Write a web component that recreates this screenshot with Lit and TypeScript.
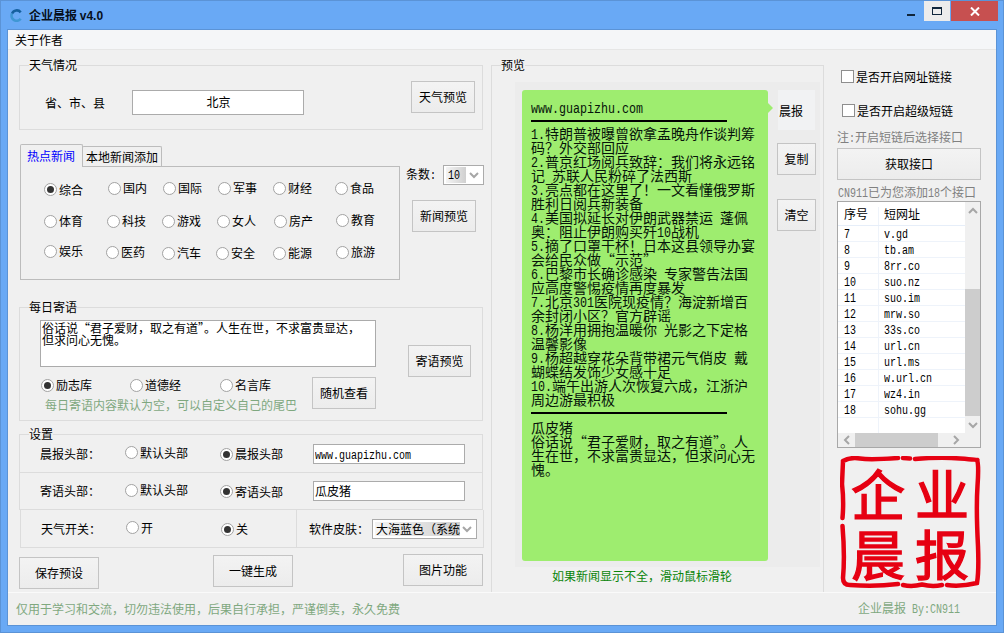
import { LitElement, html, css, svg } from "lit";
import { customElement } from "lit/decorators.js";

// half-width latin runs, like the bitmap font of the original window:
// a mono font squeezed to 0.5em per glyph, the margin takes back the spare width
const t = (text: string) =>
  text
    .split(/([\x20-\x7e]+)/)
    .map((part, i) =>
      i % 2
        ? html`<span class="latin" style="margin-right:${(-part.length * 0.1).toFixed(1)}em">${part}</span>`
        : part,
    );

const NEWS_ROWS = [
  [["综合", 44, 0], ["国内", 108, 0], ["国际", 163, 0], ["军事", 218, 0], ["财经", 273, 0], ["食品", 335, 0]],
  [["体育", 44, 0], ["科技", 107, 0], ["游戏", 162, 0], ["女人", 217, 0], ["房产", 274, 0], ["教育", 336, -1]],
  [["娱乐", 44, -2], ["医药", 106, -1], ["汽车", 162, 0], ["安全", 216, 0], ["能源", 273, 0], ["旅游", 336, -1]],
] as [string, number, number][][];

const NEWS_LINES = [
  "1.特朗普被曝曾欲拿孟晚舟作谈判筹",
  "码？外交部回应",
  "2.普京红场阅兵致辞：我们将永远铭",
  "记 苏联人民粉碎了法西斯",
  "3.亮点都在这里了！一文看懂俄罗斯",
  "胜利日阅兵新装备",
  "4.美国拟延长对伊朗武器禁运 蓬佩",
  "奥：阻止伊朗购买歼10战机",
  "5.摘了口罩干杯！日本这县领导办宴",
  "会给民众做“示范”",
  "6.巴黎市长确诊感染 专家警告法国",
  "应高度警惕疫情再度暴发",
  "7.北京301医院现疫情？海淀新增百",
  "余封闭小区？官方辟谣",
  "8.杨洋用拥抱温暖你 光影之下定格",
  "温馨影像",
  "9.杨超越穿花朵背带裙元气俏皮 戴",
  "蝴蝶结发饰少女感十足",
  "10.端午出游人次恢复六成，江浙沪",
  "周边游最积极",
];

const TAIL_LINES = ["瓜皮猪", "俗话说“君子爱财，取之有道”。人", "生在世，不求富贵显达，但求问心无", "愧。"];

const SHORT_LINKS = [
  ["7", "v.gd"],
  ["8", "tb.am"],
  ["9", "8rr.co"],
  ["10", "suo.nz"],
  ["11", "suo.im"],
  ["12", "mrw.so"],
  ["13", "33s.co"],
  ["14", "url.cn"],
  ["15", "url.ms"],
  ["16", "w.url.cn"],
  ["17", "wz4.in"],
  ["18", "sohu.gg"],
];

const chevron = (dir: "up" | "down" | "left" | "right") => {
  const d = {
    up: "M1 6 L5 2 L9 6",
    down: "M1 2 L5 6 L9 2",
    left: "M6 1 L2 5 L6 9",
    right: "M2 1 L6 5 L2 9",
  }[dir];
  const box = dir === "up" || dir === "down" ? "0 0 10 8" : "0 0 8 10";
  const [w, h] = dir === "up" || dir === "down" ? [10, 8] : [8, 10];
  return html`<svg width=${w} height=${h} viewBox=${box}>
    ${svg`<path d=${d} fill="none" stroke="#a6a6a6" stroke-width="2" />`}
  </svg>`;
};

const radio = (label: unknown, checked = false) => html`
  <span class="radio">
    <span class="dot ${checked ? "on" : ""}"></span>
    <span>${label}</span>
  </span>
`;

@customElement("app-root")
export class AppRoot extends LitElement {
  static styles = css`
    :host {
      display: block;
      width: 1004px;
      height: 633px;
      font-family: "Noto Sans CJK SC", "Liberation Sans", sans-serif;
      font-size: 12px;
      line-height: 14px;
      color: #000;
    }
    * {
      box-sizing: border-box;
    }
    .latin {
      display: inline-block;
      font-family: "Liberation Mono", monospace;
      white-space: pre;
      transform: scaleX(0.833);
      transform-origin: left;
    }
    .window {
      display: flex;
      flex-direction: column;
      width: 1004px;
      height: 633px;
      background: #69a9f5;
      border: 1px solid #5b93d6;
      padding: 0 6px 6px 6px;
    }
    .titlebar {
      display: flex;
      height: 28px;
      flex: none;
      margin-right: -1px;
    }
    .app-icon {
      margin: 8px 0 0 3px;
    }
    .title {
      margin: 7px 0 0 6px;
      font-weight: 700;
      color: #06101c;
    }
    .title b {
      font-family: "Liberation Sans", sans-serif;
    }
    .controls {
      display: flex;
      margin-left: auto;
      align-items: flex-start;
    }
    .ctl {
      display: flex;
      align-items: center;
      justify-content: center;
      width: 26px;
      height: 20px;
    }
    .ctl.min {
      padding-top: 8px;
    }
    .ctl.max {
      background: #ececec;
      margin-right: 1px;
    }
    .ctl.close {
      width: 47px;
      background: #c75050;
    }
    .min i {
      display: block;
      width: 8px;
      height: 2px;
      background: #10263c;
    }
    .max i {
      display: block;
      width: 10px;
      height: 8px;
      border: 1px solid #10263c;
      border-top-width: 2px;
    }
    .client {
      flex: 1;
      display: flex;
      flex-direction: column;
      background: #f0f0f0;
      border: 1px solid #5b93d6;
      min-height: 0;
    }
    .menu {
      flex: none;
      height: 20px;
      padding: 3px 0 0 7px;
      background: #f5f6f8;
      border-bottom: 1px solid #e6e6e6;
    }
    .body {
      flex: 1;
      display: flex;
      padding-left: 11px;
      min-height: 0;
    }
    .left {
      width: 464px;
      flex: none;
    }
    .group {
      position: relative;
      border: 1px solid #dcdcdc;
    }
    .legend {
      position: absolute;
      top: -8px;
      left: 9px;
      background: #f0f0f0;
    }
    .btn {
      display: flex;
      align-items: center;
      justify-content: center;
      flex: none;
      width: 64px;
      height: 32px;
      border: 1px solid #c4c4c4;
      background: linear-gradient(#f3f3f3, #ececec);
    }
    .btn.wide {
      width: 80px;
    }
    .input {
      flex: none;
      background: #fff;
      border: 1px solid #ababab;
      height: 20px;
      padding: 2px 0 0 1px;
    }

    .weather {
      display: flex;
      height: 65px;
      margin-top: 15px;
    }
    .weather .label {
      width: 87px;
      margin: 30px 0 0 25px;
    }
    .weather .input {
      width: 172px;
      height: 25px;
      margin-top: 24px;
      padding-top: 4px;
      text-align: center;
    }
    .weather .btn {
      margin: 15px 0 0 107px;
    }

    .news {
      display: flex;
      margin: 14px 0 0 1px;
    }
    .tabs {
      display: flex;
      align-items: flex-end;
      height: 23px;
      margin-bottom: -1px;
    }
    .tab {
      position: relative;
      border: 1px solid #bcbcbc;
      border-bottom: none;
      border-radius: 2px 2px 0 0;
    }
    .tab.on {
      z-index: 1;
      width: 63px;
      height: 23px;
      padding: 4px 0 0 6px;
      background: #f0f0f0;
      color: #0000ff;
    }
    .tab.off {
      width: 80px;
      height: 21px;
      margin-left: -1px;
      padding: 3px 0 0 3px;
    }
    .panel {
      width: 380px;
      height: 114px;
      border: 1px solid #bcbcbc;
      padding-top: 14px;
    }
    .news-row {
      display: flex;
      height: 14px;
      margin-bottom: 19px;
      padding-left: 23px;
    }
    .news-row:nth-child(2) {
      margin-bottom: 18px;
    }
    .radio {
      display: inline-flex;
      align-items: center;
      gap: 2px;
      white-space: nowrap;
      height: 14px;
    }
    .dot {
      display: flex;
      align-items: center;
      justify-content: center;
      flex: none;
      width: 13px;
      height: 13px;
      border-radius: 50%;
      border: 1px solid #a2a2a2;
      background: #fff;
    }
    .dot.on::after {
      content: "";
      width: 7px;
      height: 7px;
      border-radius: 50%;
      background: #333;
    }
    .news-side {
      width: 78px;
      margin-left: 6px;
      padding-top: 21px;
    }
    .count {
      display: flex;
      align-items: center;
      gap: 7px;
      height: 20px;
      white-space: nowrap;
    }
    .select {
      display: flex;
      align-items: center;
      flex: none;
      height: 20px;
      background: #fff;
      border: 1px solid #ababab;
      padding: 0 4px 0 2px;
    }
    .select svg {
      margin-left: auto;
    }
    .select .value {
      padding: 0 2px;
      background: linear-gradient(90deg, #f4f4f4, #d0d0d0);
      white-space: nowrap;
    }
    .count .select {
      width: 41px;
    }
    .count .value {
      width: 20px;
    }
    .news-side .btn {
      margin: 15px 0 0 6px;
    }

    .motto {
      display: flex;
      height: 114px;
      margin-top: 27px;
    }
    .motto-main {
      width: 356px;
      padding: 12px 0 0 20px;
    }
    .textarea {
      width: 336px;
      height: 47px;
      background: #fff;
      border: 1px solid #ababab;
      padding: 1px 0 0 1px;
      line-height: 12px;
      white-space: nowrap;
    }
    .motto-lower {
      display: flex;
      margin-top: 10px;
    }
    .motto-col {
      width: 273px;
    }
    .motto-radios {
      display: flex;
      height: 14px;
      margin: 1px 0 6px 1px;
    }
    .motto-radios > span:nth-child(1) {
      width: 89px;
    }
    .motto-radios > span:nth-child(2) {
      width: 90px;
    }
    .note {
      margin-left: 5px;
      color: #7fa87f;
    }
    .motto > .btn {
      width: 63px;
      margin: 37px 0 0 32px;
    }

    .settings {
      height: 76px;
      margin-top: 13px;
    }
    .set-row {
      display: flex;
      align-items: center;
      height: 37px;
    }
    .set-row + .set-row {
      height: 37px;
      border-top: 1px solid #dcdcdc;
    }
    .set-row .label {
      width: 85px;
      margin-left: 20px;
    }
    .set-row .c1 {
      width: 95px;
    }
    .set-row .c2 {
      width: 93px;
    }
    .set-row .input {
      width: 152px;
    }
    .switches {
      display: flex;
      align-items: center;
      width: 464px;
      height: 38px;
      margin-left: 1px;
      border: 1px solid #dcdcdc;
      border-top: none;
    }
    .switches .label {
      width: 85px;
      margin-left: 20px;
    }
    .switches .c1 {
      width: 95px;
    }
    .switches .c2 {
      width: 75px;
    }
    .skin {
      display: flex;
      align-items: center;
      height: 100%;
      border-left: 1px solid #dcdcdc;
      padding-left: 12px;
    }
    .skin > span {
      width: 63px;
    }
    .skin .select {
      width: 105px;
    }
    .skin .value {
      width: 85px;
      padding: 0 0 0 1px;
    }
    .actions {
      display: flex;
      align-items: flex-start;
      margin-top: 6px;
    }
    .actions .a {
      margin-top: 3px;
    }
    .actions .b {
      margin: 1px 0 0 114px;
    }
    .actions .c {
      margin-left: 110px;
    }

    .mid {
      width: 333px;
      flex: none;
      margin-left: 8px;
      padding-top: 15px;
    }
    .preview {
      height: 527px;
      border-bottom: none;
      padding: 16px 0 0 23px;
    }
    .web {
      display: flex;
      width: 305px;
      height: 485px;
      padding: 8px 0 0 7px;
      background: #ececec;
    }
    .bubble {
      position: relative;
      flex: none;
      width: 246px;
      height: 471px;
      padding: 10px 0 0 9px;
      background: #9eed6f;
      border-radius: 3px;
      font-size: 14px;
      white-space: nowrap;
      color: #06140a;
    }
    .bubble::after {
      content: "";
      position: absolute;
      top: 13px;
      right: -5px;
      border-left: 5px solid #9eed6f;
      border-top: 5px solid transparent;
      border-bottom: 5px solid transparent;
    }
    .line {
      height: 14px;
    }
    .rule {
      width: 196px;
      height: 2px;
      background: #000;
    }
    .rule.r1 {
      margin: 6px 0 4px;
    }
    .rule.r2 {
      margin: 6px 0;
    }
    .web-side {
      width: 39px;
      margin-left: 9px;
    }
    .avatar {
      width: 37px;
      height: 40px;
      margin-left: 1px;
      padding: 14px 0 0 1px;
      background: #f1f2f3;
    }
    .web-side .btn {
      width: 39px;
      margin-top: 13px;
    }
    .web-side .btn + .btn {
      margin-top: 24px;
    }
    .tip {
      margin: 2px 0 0 37px;
      color: #0a850a;
    }

    .right {
      width: 144px;
      flex: none;
      margin-left: 13px;
      padding-top: 20px;
    }
    .check {
      display: flex;
      align-items: center;
      gap: 2px;
      height: 13px;
      margin-left: 4px;
      white-space: nowrap;
    }
    .check i {
      flex: none;
      width: 13px;
      height: 13px;
      background: #fff;
      border: 1px solid #8e8e8e;
    }
    .check + .check {
      margin: 21px 0 0 5px;
    }
    .hint {
      color: #808080;
      white-space: nowrap;
      height: 14px;
    }
    .hint.h1 {
      margin-top: 13px;
    }
    .hint.h2 {
      margin: 5px 0 2px 1px;
    }
    .right .btn {
      width: 144px;
      margin-top: 4px;
    }
    .list {
      display: flex;
      flex-direction: column;
      height: 247px;
      background: #fff;
      border: 1px solid #a8a8a8;
    }
    .list-top {
      display: flex;
      height: 231px;
    }
    .table {
      display: flex;
      flex-direction: column;
      width: 127px;
      flex: none;
    }
    .tr {
      display: flex;
      flex: none;
      height: 16px;
      border-bottom: 1px solid #eef3fa;
    }
    .tr.head {
      height: 24px;
      padding-top: 5px;
      border-bottom-color: #e6eef9;
    }
    .tr.blank {
      flex: 1;
      border-bottom: none;
    }
    .tr > span:first-child {
      width: 41px;
      padding-left: 6px;
      border-right: 1px solid #eef3fa;
    }
    .tr > span:last-child {
      padding-left: 5px;
    }
    .vscroll {
      display: flex;
      flex-direction: column;
      width: 15px;
      background: #f0f0f0;
    }
    .vscroll .arrow {
      display: flex;
      align-items: center;
      justify-content: center;
      flex: none;
      height: 17px;
    }
    .vscroll .track {
      flex: none;
      height: 197px;
      padding-top: 70px;
    }
    .vscroll .thumb {
      height: 127px;
      background: #cdcdcd;
    }
    .hscroll {
      display: flex;
      align-items: center;
      height: 14px;
      background: #f0f0f0;
    }
    .hscroll .arrow {
      display: flex;
      align-items: center;
      justify-content: center;
      width: 17px;
      flex: none;
    }
    .hscroll .thumb {
      width: 83px;
      height: 14px;
      flex: none;
      background: #cdcdcd;
    }
    .hscroll .arrow:last-child {
      margin-left: 9px;
    }
    .seal {
      position: relative;
      width: 141px;
      height: 133px;
      margin: 8px 0 0 3px;
      padding: 7px 0 0 6px;
    }
    .seal svg {
      position: absolute;
      inset: 0;
    }
    .seal-chars {
      display: grid;
      grid-template-columns: 64px 64px;
      grid-template-rows: 60px 60px;
      place-items: center;
      font-size: 54px;
      line-height: 60px;
      color: #e60012;
      -webkit-text-stroke: 1.4px #e60012;
    }

    .status {
      flex: none;
      display: flex;
      align-items: center;
      justify-content: space-between;
      height: 33px;
      padding: 0 36px 0 8px;
      border-top: 1px solid #fafafa;
      color: #7fa87f;
    }
  `;

  render() {
    return html`
      <div class="window">
        <div class="titlebar">
          <svg class="app-icon" width="13" height="13" viewBox="0 0 14 14">
            <path d="M11.5 3.6 A5.4 5.4 0 0 0 2.2 5" fill="none" stroke="#15609f" stroke-width="2.8" />
            <path d="M2.2 5 A5.4 5.4 0 0 0 11.5 10.4" fill="none" stroke="#3f97d4" stroke-width="2.8" />
          </svg>
          <span class="title">企业晨报 <b>v4.0</b></span>
          <div class="controls">
            <div class="ctl min"><i></i></div>
            <div class="ctl max"><i></i></div>
            <div class="ctl close">
              <svg width="10" height="9" viewBox="0 0 10 9">
                <path d="M1 0.5 L9 8.5 M9 0.5 L1 8.5" stroke="#fff" stroke-width="2" />
              </svg>
            </div>
          </div>
        </div>
        <div class="client">
          <div class="menu">关于作者</div>
          <div class="body">
            ${this.renderLeft()} ${this.renderPreview()} ${this.renderRight()}
          </div>
          <div class="status">
            <span>仅用于学习和交流，切勿违法使用，后果自行承担，严谨倒卖，永久免费</span>
            <span>企业晨报${t(" By:CN911")}</span>
          </div>
        </div>
      </div>
    `;
  }

  renderLeft() {
    return html`
      <div class="left">
        <div class="group weather">
          <span class="legend">天气情况</span>
          <span class="label">省、市、县</span>
          <div class="input">北京</div>
          <div class="btn">天气预览</div>
        </div>

        <div class="news">
          <div>
            <div class="tabs">
              <div class="tab on">热点新闻</div>
              <div class="tab off">本地新闻添加</div>
            </div>
            <div class="panel">
              ${NEWS_ROWS.map(
                (row) => html`
                  <div class="news-row">
                    ${row.map(([label, x, dy], i) => {
                      const next = row[i + 1] ? row[i + 1][1] : x + 40;
                      return html`<span style="width:${next - x}px;margin-top:${dy}px">
                        ${radio(label, label === "综合")}
                      </span>`;
                    })}
                  </div>
                `,
              )}
            </div>
          </div>
          <div class="news-side">
            <div class="count">
              <span>条数${t(":")}</span>
              <div class="select">
                <span class="value">${t("10")}</span>${chevron("down")}
              </div>
            </div>
            <div class="btn">新闻预览</div>
          </div>
        </div>

        <div class="group motto">
          <span class="legend">每日寄语</span>
          <div class="motto-main">
            <div class="textarea">
              俗话说“君子爱财，取之有道”。人生在世，不求富贵显达，<br />但求问心无愧。
            </div>
            <div class="motto-lower">
              <div class="motto-col">
                <div class="motto-radios">
                  ${radio("励志库", true)} ${radio("道德经")} ${radio("名言库")}
                </div>
                <div class="note">每日寄语内容默认为空，可以自定义自己的尾巴</div>
              </div>
              <div class="btn">随机查看</div>
            </div>
          </div>
          <div class="btn">寄语预览</div>
        </div>

        <div class="group settings">
          <span class="legend">设置</span>
          <div class="set-row">
            <span class="label">晨报头部：</span>
            <span class="c1">${radio("默认头部")}</span>
            <span class="c2">${radio("晨报头部", true)}</span>
            <div class="input">${t("www.guapizhu.com")}</div>
          </div>
          <div class="set-row">
            <span class="label">寄语头部：</span>
            <span class="c1">${radio("默认头部")}</span>
            <span class="c2">${radio("寄语头部", true)}</span>
            <div class="input">瓜皮猪</div>
          </div>
        </div>
        <div class="switches">
          <span class="label">天气开关：</span>
          <span class="c1">${radio("开")}</span>
          <span class="c2">${radio("关", true)}</span>
          <div class="skin">
            <span>软件皮肤：</span>
            <div class="select">
              <span class="value">大海蓝色（系统</span>${chevron("down")}
            </div>
          </div>
        </div>
        <div class="actions">
          <div class="btn wide a">保存预设</div>
          <div class="btn wide b">一键生成</div>
          <div class="btn wide c">图片功能</div>
        </div>
      </div>
    `;
  }

  renderPreview() {
    return html`
      <div class="mid">
        <div class="group preview">
          <span class="legend">预览</span>
          <div class="web">
            <div class="bubble">
              <div class="line">${t("www.guapizhu.com")}</div>
              <div class="rule r1"></div>
              ${NEWS_LINES.map((line) => html`<div class="line">${t(line)}</div>`)}
              <div class="rule r2"></div>
              ${TAIL_LINES.map((line) => html`<div class="line">${line}</div>`)}
            </div>
            <div class="web-side">
              <div class="avatar">晨报</div>
              <div class="btn">复制</div>
              <div class="btn">清空</div>
            </div>
          </div>
          <div class="tip">如果新闻显示不全，滑动鼠标滑轮</div>
        </div>
      </div>
    `;
  }

  renderRight() {
    return html`
      <div class="right">
        <div class="check"><i></i><span>是否开启网址链接</span></div>
        <div class="check"><i></i><span>是否开启超级短链</span></div>
        <div class="hint h1">注${t(":")}开启短链后选择接口</div>
        <div class="btn">获取接口</div>
        <div class="hint h2">${t("CN911")}已为您添加${t("18")}个接口</div>
        <div class="list">
          <div class="list-top">
            <div class="table">
              <div class="tr head"><span>序号</span><span>短网址</span></div>
              ${SHORT_LINKS.map(
                ([n, url]) => html`<div class="tr"><span>${t(n)}</span><span>${t(url)}</span></div>`,
              )}
              <div class="tr blank"><span></span><span></span></div>
            </div>
            <div class="vscroll">
              <div class="arrow">${chevron("up")}</div>
              <div class="track"><div class="thumb"></div></div>
              <div class="arrow">${chevron("down")}</div>
            </div>
          </div>
          <div class="hscroll">
            <div class="arrow">${chevron("left")}</div>
            <div class="thumb"></div>
            <div class="arrow">${chevron("right")}</div>
          </div>
        </div>
        <div class="seal">
          <svg width="141" height="133" viewBox="0 0 141 133">
            <path
              d="M3 5 Q10 1 20 2.5 T58 2 M63 2 L70 2.5 M75 3 Q100 1 120 2.5 T137 4 Q139 8 137.5 30 T138 90 Q139 115 137 127 Q120 131 107 129 M102 129 Q92 131 82 128.5 Q72 131 63 129 M58 128 Q35 131 10 129 Q3 129 3 122 Q5 100 2.5 70 M2.5 62 Q4 45 2 28 L3 5"
              fill="none"
              stroke="#e60012"
              stroke-width="4.5"
              stroke-linecap="round"
            />
          </svg>
          <div class="seal-chars">
            <span>企</span><span>业</span><span>晨</span><span>报</span>
          </div>
        </div>
      </div>
    `;
  }
}
